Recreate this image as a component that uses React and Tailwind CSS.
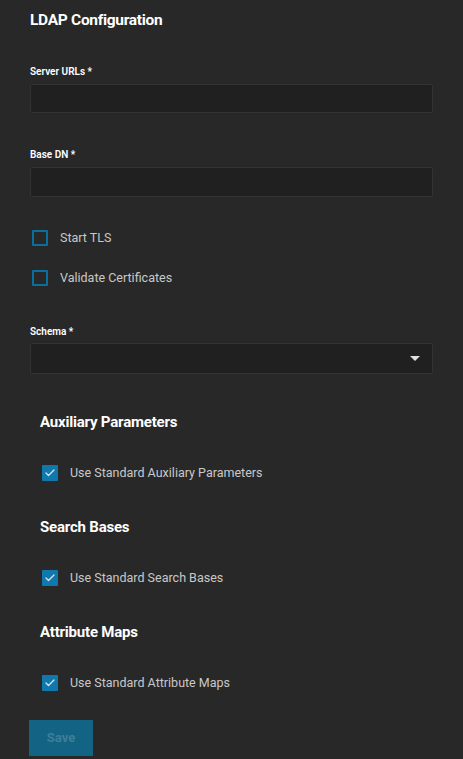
import { FiCheck } from 'react-icons/fi';

function Label({ children }) {
  return <div className="text-[10px] font-semibold text-white leading-[10px]">{children} *</div>;
}

function Checkbox({ checked, label }) {
  return (
    <div className="flex items-center h-4 leading-4">
      {checked ? (
        <div className="w-4 h-4 rounded-[1px] bg-[#0f78ac] flex items-center justify-center">
          <FiCheck className="w-3 h-3 text-[#dde6ec]" strokeWidth={2.5} />
        </div>
      ) : (
        <div className="w-4 h-4 border-2 border-[#0a6e9e] rounded-[1px]" />
      )}
      <span className="ml-[12px] text-[12.5px] text-[#c8c8c8]">{label}</span>
    </div>
  );
}

function Section({ title, label }) {
  return (
    <div className="pl-[10px]">
      <h3 className="text-[15px] font-bold text-white leading-[15px] tracking-[-0.2px]">{title}</h3>
      <div className="mt-[35px] pl-[2px]">
        <Checkbox checked label={label} />
      </div>
    </div>
  );
}

export default function App() {
  return (
    <div className="min-h-[759px] bg-[#282828] px-[30px] pt-[12px]" style={{ fontFamily: 'Roboto, "Liberation Sans", sans-serif' }}>
      <h2 className="text-[15.5px] font-bold text-white leading-[16px] tracking-[-0.3px]">LDAP Configuration</h2>

      <div className="mt-[39px]">
        <Label>Server URLs</Label>
        <div className="mt-[7px] h-[29px] bg-[#202020] border border-[#333333] rounded-[2px]" />
      </div>

      <div className="mt-[37px]">
        <Label>Base DN</Label>
        <div className="mt-[7px] h-[30px] bg-[#202020] border border-[#333333] rounded-[2px]" />
      </div>

      <div className="mt-[33px] pl-[2px] space-y-[24px]">
        <Checkbox label="Start TLS" />
        <Checkbox label="Validate Certificates" />
      </div>

      <div className="mt-[41px]">
        <Label>Schema</Label>
        <div className="mt-[6px] h-[31px] bg-[#202020] border border-[#333333] rounded-[2px] flex items-center justify-end pr-[12px]">
          <div className="w-0 h-0 border-l-[5px] border-r-[5px] border-t-[5px] border-l-transparent border-r-transparent border-t-[#e0e0e0]" />
        </div>
      </div>

      <div className="mt-[41px] space-y-[39px]">
        <Section title="Auxiliary Parameters" label="Use Standard Auxiliary Parameters" />
        <Section title="Search Bases" label="Use Standard Search Bases" />
        <Section title="Attribute Maps" label="Use Standard Attribute Maps" />
      </div>

      <button className="block mt-[29px] ml-[-1px] w-[64px] h-[36px] bg-[#136384] text-[#3d7e99] text-[13px] font-bold">Save</button>
    </div>
  );
}
